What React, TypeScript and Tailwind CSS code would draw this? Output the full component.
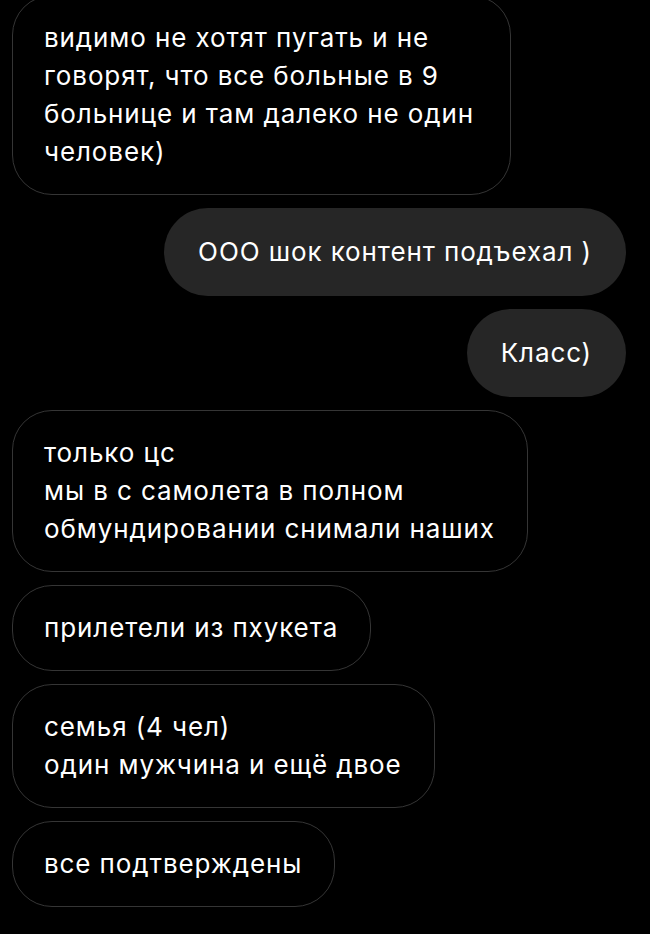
import React from 'react';

type Msg = { lines: string[]; mine?: boolean; width?: string };

const messages: Msg[] = [
  {
    lines: ['видимо не хотят пугать и не', 'говорят, что все больные в 9', 'больнице и там далеко не один', 'человек)'],
    width: 'w-[499px]',
  },
  { lines: ['ООО шок контент подъехал )'], mine: true },
  { lines: ['Класс)'], mine: true },
  { lines: ['только цс', 'мы в с самолета в полном', 'обмундировании снимали наших'] },
  { lines: ['прилетели из пхукета'] },
  { lines: ['семья (4 чел)', 'один мужчина и ещё двое'] },
  { lines: ['все подтверждены'] },
];

const Bubble = ({ msg }: { msg: Msg }) => {
  const base = 'rounded-[40px] text-[26px] leading-[38px] tracking-[0.9px] text-white whitespace-nowrap';
  const look = msg.mine
    ? 'self-end bg-[#262626] px-[34px] py-[25px] rounded-full'
    : 'self-start border border-[#353535] pl-[31px] pr-[32px] py-[23px]';

  return (
    <div className={`${base} ${look} ${msg.width ?? ''}`}>
      {msg.lines.map((line, idx) => (
        <div key={idx}>{line}</div>
      ))}
    </div>
  );
};

export default function App() {
  return (
    <div
      className="min-h-[934px] w-[650px] overflow-hidden bg-black"
      style={{ fontFamily: 'Inter, "Noto Sans", sans-serif' }}
    >
      <div className="-mt-[5px] flex flex-col gap-[13px] pl-[12px] pr-[24px]">
        {messages.map((msg, idx) => (
          <Bubble key={idx} msg={msg} />
        ))}
      </div>
    </div>
  );
}
